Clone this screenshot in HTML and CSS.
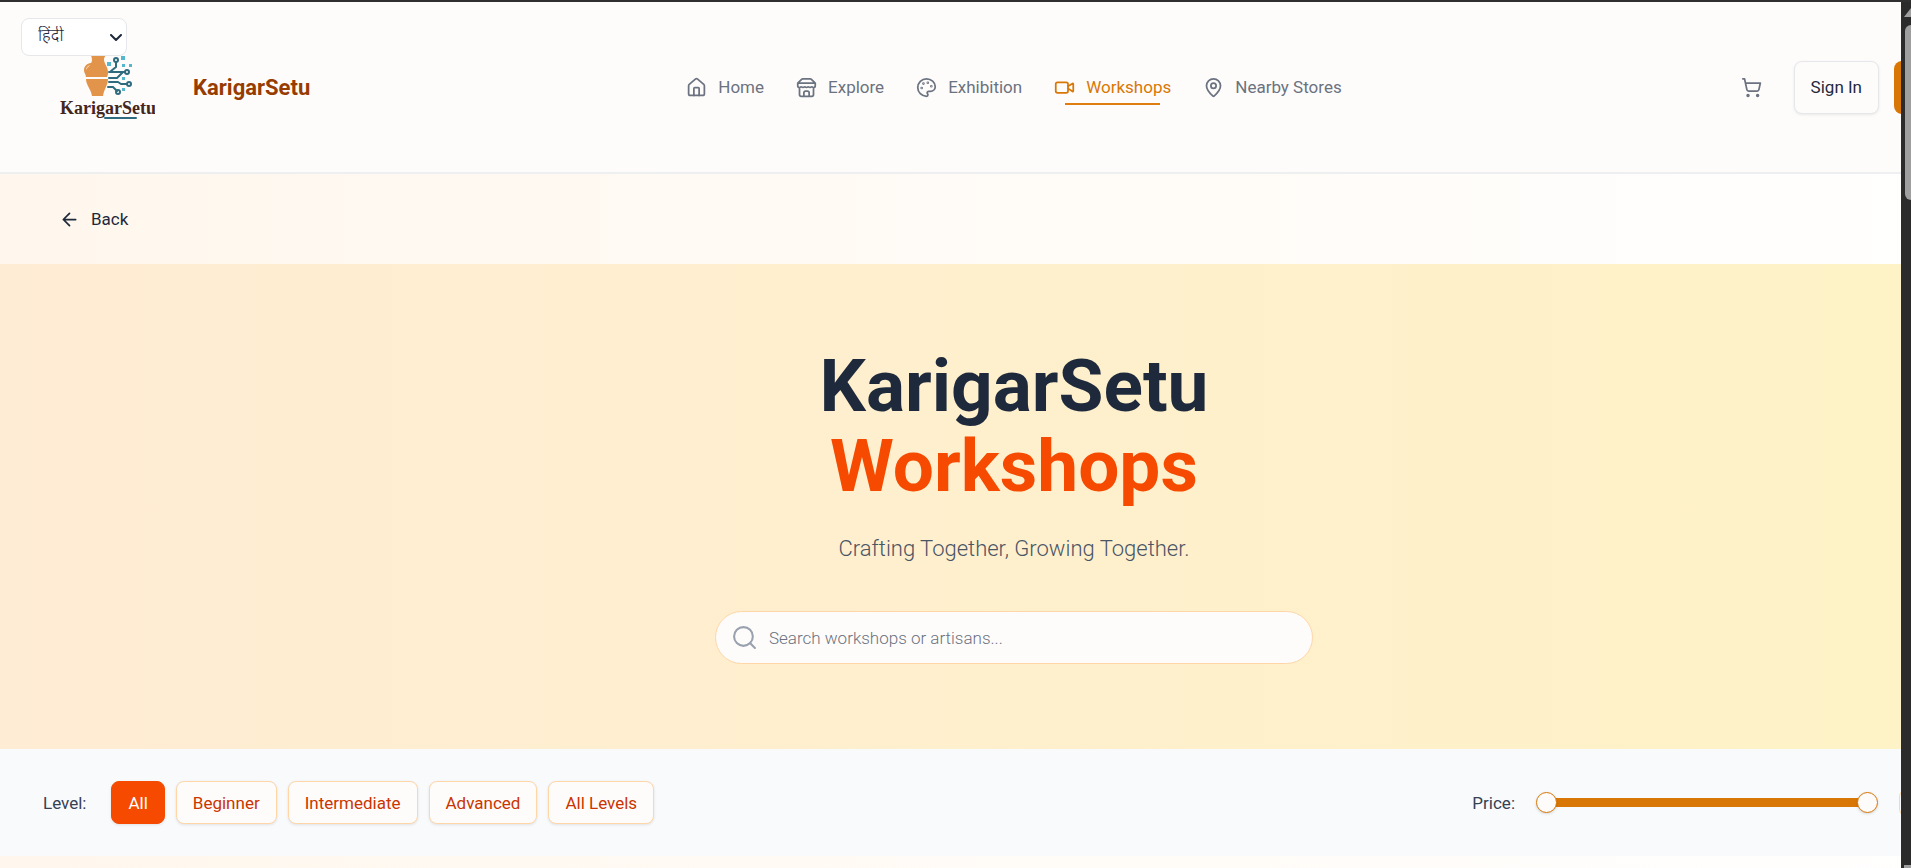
FILE: index.html
```html
<!DOCTYPE html>
<html lang="en">
<head>
<meta charset="utf-8">
<title>KarigarSetu Workshops</title>
<link rel="stylesheet" href="styles.css">
</head>
<body>
<div class="window">
  <div class="viewport">
    <div class="page">
      <div class="lang">
        <select class="lang-select" aria-label="हिंदी"><option>हिंदी</option></select>
        <svg class="lang-arrow" viewBox="0 0 12 8" aria-hidden="true"><path d="M1 1l5 5 5-5"/></svg>
      </div>
      <header class="header">
        <div class="brand">
          <svg class="logo" viewBox="0 0 96 72" aria-hidden="true">
            <path class="pot" d="M32 3h15c0 2-2 3-2 5 0 5 4 8 4 13 0 2 0 3-1 5H27c-1-3-1-6 1-9 3-3 5-5 5-8 0-2-1-4-1-6z"/>
            <path class="pot" d="M27 28h22c0 6-4 10-5 17H33c-1-7-6-11-6-17z"/>
            <path class="handle" d="M35 13c-5-1-9 2-9 6 0 2 1 4 3 5"/>
            <g class="circuit">
              <path d="M50 21h16M50 27h8l6-6M52 20l5-4v-5M50 31h9l3 2h6M49 36h5l4 4"/>
              <circle cx="57" cy="9" r="2"/><circle cx="68" cy="21" r="2"/>
              <circle cx="70" cy="33" r="2"/><circle cx="59" cy="41" r="2"/>
            </g>
            <path class="dots" d="M48 11h4v4h-4zM62 5h4v4h-4zM63 13h3v3h-3zM70 13h3v3h-3zM63 26h3v3h-3zM63 37h3v3h-3z"/>
            <text class="logo-text" x="1" y="63">KarigarSetu</text>
            <path class="logo-line" d="M46 67h31"/>
          </svg>
          <span class="brand-name">KarigarSetu</span>
        </div>
        <nav class="nav">
          <a href="#"><svg viewBox="0 0 24 24"><path d="M15 21v-8a1 1 0 0 0-1-1h-4a1 1 0 0 0-1 1v8"/><path d="M3 10a2 2 0 0 1 .709-1.528l7-6a2 2 0 0 1 2.582 0l7 6A2 2 0 0 1 21 10v9a2 2 0 0 1-2 2H5a2 2 0 0 1-2-2z"/></svg>Home</a>
          <a href="#"><svg viewBox="0 0 24 24"><path d="m2 7 4.410-4.410A2 2 0 0 1 7.830 2h8.340a2 2 0 0 1 1.420.590L22 7M4 12v8a2 2 0 0 0 2 2h12a2 2 0 0 0 2-2v-8M15 22v-4a2 2 0 0 0-2-2h-2a2 2 0 0 0-2 2v4M2 7h20M22 7v3a2 2 0 0 1-2 2 2.700 2.700 0 0 1-1.590-.630.700.700 0 0 0-.820 0A2.700 2.700 0 0 1 16 12a2.700 2.700 0 0 1-1.590-.630.700.700 0 0 0-.820 0A2.700 2.700 0 0 1 12 12a2.700 2.700 0 0 1-1.590-.630.700.700 0 0 0-.820 0A2.700 2.700 0 0 1 8 12a2.700 2.700 0 0 1-1.590-.630.700.700 0 0 0-.820 0A2.700 2.700 0 0 1 4 12a2 2 0 0 1-2-2V7"/></svg>Explore</a>
          <a href="#"><svg viewBox="0 0 24 24"><circle cx="13.500" cy="6.500" r=".5"/><circle cx="17.500" cy="10.500" r=".5"/><circle cx="8.500" cy="7.500" r=".5"/><circle cx="6.500" cy="12.500" r=".5"/><path d="M12 2C6.500 2 2 6.500 2 12s4.500 10 10 10c.926 0 1.648-.746 1.648-1.688 0-.437-.180-.835-.437-1.125-.290-.289-.438-.652-.438-1.125a1.640 1.640 0 0 1 1.668-1.668h1.996c3.051 0 5.555-2.503 5.555-5.554C21.965 6.012 17.461 2 12 2z"/></svg>Exhibition</a>
          <a href="#" class="active" aria-current="page"><svg viewBox="0 0 24 24"><path d="m16 13 5.223 3.482a.5.5 0 0 0 .777-.416V7.870a.5.5 0 0 0-.752-.432L16 10.500"/><rect x="2" y="6" width="14" height="12" rx="2"/></svg>Workshops</a>
          <a href="#"><svg viewBox="0 0 24 24"><path d="M20 10c0 4.993-5.539 10.193-7.399 11.799a1 1 0 0 1-1.202 0C9.539 20.193 4 14.993 4 10a8 8 0 0 1 16 0"/><circle cx="12" cy="10" r="3"/></svg>Nearby Stores</a>
        </nav>
        <div class="actions">
          <button class="cart" type="button" aria-label="Cart"><svg viewBox="0 0 24 24"><circle cx="8" cy="21" r="1"/><circle cx="19" cy="21" r="1"/><path d="M2.050 2.050h2l2.660 12.420a2 2 0 0 0 2 1.580h9.780a2 2 0 0 0 1.950-1.570l1.650-7.430H5.120"/></svg></button>
          <button class="sign-in" type="button">Sign In</button>
          <button class="primary" type="button"></button>
        </div>
      </header>

      <main>
        <div class="back-row">
          <a class="back" href="#"><svg viewBox="0 0 24 24"><path d="m12 19-7-7 7-7M19 12H5"/></svg>Back</a>
        </div>
        <section class="hero">
          <h1 class="title">KarigarSetu <span>Workshops</span></h1>
          <p class="tagline">Crafting Together, Growing Together.</p>
          <label class="search">
            <svg viewBox="0 0 24 24" aria-hidden="true"><circle cx="11" cy="11" r="9"/><path d="m22 22-4.500-4.500"/></svg>
            <input type="text" placeholder="Search workshops or artisans..." aria-label="Search workshops or artisans...">
          </label>
        </section>
        <section class="filters">
          <div class="levels" role="group" aria-labelledby="level-label">
            <span class="label" id="level-label">Level:</span>
            <button class="chip selected" type="button">All</button>
            <button class="chip" type="button">Beginner</button>
            <button class="chip" type="button">Intermediate</button>
            <button class="chip" type="button">Advanced</button>
            <button class="chip" type="button">All Levels</button>
          </div>
          <div class="price">
            <span class="label" id="price-label">Price:</span>
            <div class="slider">
              <input type="range" min="0" max="100" value="0" aria-labelledby="price-label">
              <input type="range" min="0" max="100" value="100" aria-labelledby="price-label">
            </div>
            <span class="price-box"></span>
          </div>
        </section>
      </main>
    </div>
  </div>
  <div class="scrollbar" aria-hidden="true">
    <svg class="scroll-up" viewBox="0 0 14 10"><path d="M7 0 14 9H0z"/></svg>
    <div class="scroll-thumb"></div>
    <div class="scroll-end"></div>
  </div>
</div>
</body>
</html>
```

FILE: styles.css
```css
* { box-sizing: border-box; }

body {
  margin: 0;
  font-family: Roboto, "Noto Sans", sans-serif;
  font-size: 17px;
  color: #1e293b;
}

button, input, select { font: inherit; color: inherit; }
a { color: inherit; text-decoration: none; }
svg { fill: none; stroke: currentColor; stroke-width: 2; stroke-linecap: round; stroke-linejoin: round; flex: none; }

.window {
  display: flex;
  height: 100vh;
  overflow: hidden;
  border-top: 2px solid #2f2f2f;
}

.viewport { flex: 1; min-width: 0; overflow: hidden; }

.page {
  position: relative;
  width: calc(100% + 127px);
  min-height: 100%;
  background: linear-gradient(to right, #fff7ed, #ffffff);
}

.lang { position: absolute; top: 16px; left: 21px; z-index: 2; width: 106px; }
.lang-select {
  display: block;
  width: 100%;
  height: 38px;
  padding: 0 16px;
  appearance: none;
  background: #ffffff;
  border: 1px solid #e5e7eb;
  border-radius: 8px;
  font-family: "Noto Sans Devanagari", "Noto Sans", sans-serif;
  font-weight: 300;
}
.lang-arrow { position: absolute; right: 5px; top: 16px; width: 12px; height: 8px; pointer-events: none; }

.header {
  display: grid;
  grid-template-columns: 1fr auto 1fr;
  align-items: center;
  height: 172px;
  padding: 0 59px;
  background: #fefcfb;
  border-bottom: 2px solid #eeeff1;
}

.brand { display: flex; align-items: center; gap: 38px; }
.logo { width: 96px; height: 72px; stroke: none; }
.pot { fill: #e2944a; }
.handle { stroke: #e2944a; stroke-width: 2; }
.circuit { stroke: #2f6b7e; stroke-width: 2; }
.dots { fill: #55b7cb; }
.logo-text { fill: #43261d; font-family: "Liberation Serif", serif; font-size: 18px; font-weight: 700; }
.logo-line { stroke: #2f6b7e; stroke-width: 2; }
.brand-name { color: #973c00; font-size: 22px; font-weight: 700; }

.nav { display: flex; align-items: center; gap: 32px; color: #6b7280; }
.nav a { position: relative; display: flex; align-items: center; gap: 11px; }
.nav svg { width: 21px; height: 21px; }
.nav .active { color: #d97706; }
.nav .active::after {
  content: "";
  position: absolute;
  left: 11px;
  right: 11px;
  bottom: -7px;
  height: 2px;
  background: #e07d10;
}

.actions { display: flex; align-items: center; justify-content: flex-end; gap: 15px; }
.cart { display: flex; margin-right: 17px; padding: 0; border: 0; background: none; color: #6b7280; }
.cart svg { width: 21px; height: 21px; }
.sign-in {
  height: 53px;
  padding: 0 16px;
  background: #fefcfb;
  border: 1px solid #e5e7eb;
  border-radius: 8px;
  box-shadow: 0 1px 3px rgba(0, 0, 0, 0.08);
}
.primary { width: 75px; height: 53px; border: 0; border-radius: 8px; background: #d97706; }

.back-row { display: flex; align-items: center; height: 90px; padding: 0 59px; }
.back { display: flex; align-items: center; gap: 11px; }
.back svg { width: 21px; height: 21px; }

.hero {
  display: flex;
  flex-direction: column;
  align-items: center;
  padding: 82px 24px 85px;
  background: linear-gradient(to right, #ffecd4, #fef3c6);
}
.title { display: flex; flex-direction: column; align-items: center; margin: 0; font-size: 73px; font-weight: 700; line-height: 80px; }
.title span { color: #f54a00; }
.tagline { margin: 28px 0 47px; color: #4a5565; font-size: 22px; font-weight: 300; line-height: 30px; }

.search {
  display: flex;
  align-items: center;
  gap: 12px;
  width: 598px;
  max-width: 100%;
  height: 53px;
  padding: 0 16px;
  background: #fefcfb;
  border: 1px solid #ffd6a8;
  border-radius: 27px;
}
.search svg { width: 25px; height: 25px; color: #99a1af; }
.search input { flex: 1; padding: 0; border: 0; outline: 0; background: none; font-weight: 300; }
.search input::placeholder { color: #6b7280; opacity: 1; }

.filters {
  display: flex;
  align-items: center;
  justify-content: space-between;
  padding: 32px 43px;
  background: #f8fafc;
}
.levels, .price { display: flex; align-items: center; }
.levels { gap: 11px; }
.label { color: #364153; }
.levels .label { margin-right: 14px; }
.chip {
  height: 43px;
  padding: 0 16px;
  background: #fefcfb;
  border: 1px solid #ffd6a8;
  border-radius: 8px;
  box-shadow: 0 1px 3px rgba(0, 0, 0, 0.1);
  color: #ca3500;
}
.chip.selected { background: #f54a00; border-color: #f54a00; color: #ffffff; }

.price { gap: 21px; }
.slider { position: relative; width: 342px; height: 21px; }
.slider::before {
  content: "";
  position: absolute;
  inset: 6px 10px;
  background: #d97706;
}
.slider input {
  position: absolute;
  inset: 0;
  width: 100%;
  height: 21px;
  margin: 0;
  appearance: none;
  background: none;
  pointer-events: none;
}
.slider input::-webkit-slider-thumb {
  appearance: none;
  width: 21px;
  height: 21px;
  background: #fefcfb;
  border: 1px solid #d97706;
  border-radius: 50%;
  box-shadow: 0 1px 3px rgba(0, 0, 0, 0.15);
  pointer-events: auto;
}
.price-box { width: 86px; height: 28px; border: 1px solid #ffd6a8; border-radius: 8px; }

.scrollbar {
  display: flex;
  flex: 0 0 10px;
  flex-direction: column;
  overflow: hidden;
  padding: 6px 0 0 3px;
  background: #2b2b2b;
}
.scroll-up { width: 14px; height: 10px; fill: #9f9f9f; stroke: none; }
.scroll-thumb { width: 13px; height: 175px; margin: 7px 0 auto 1px; border-radius: 6px; background: #9f9f9f; }
.scroll-end { width: 14px; height: 3px; background: #9f9f9f; }
```
